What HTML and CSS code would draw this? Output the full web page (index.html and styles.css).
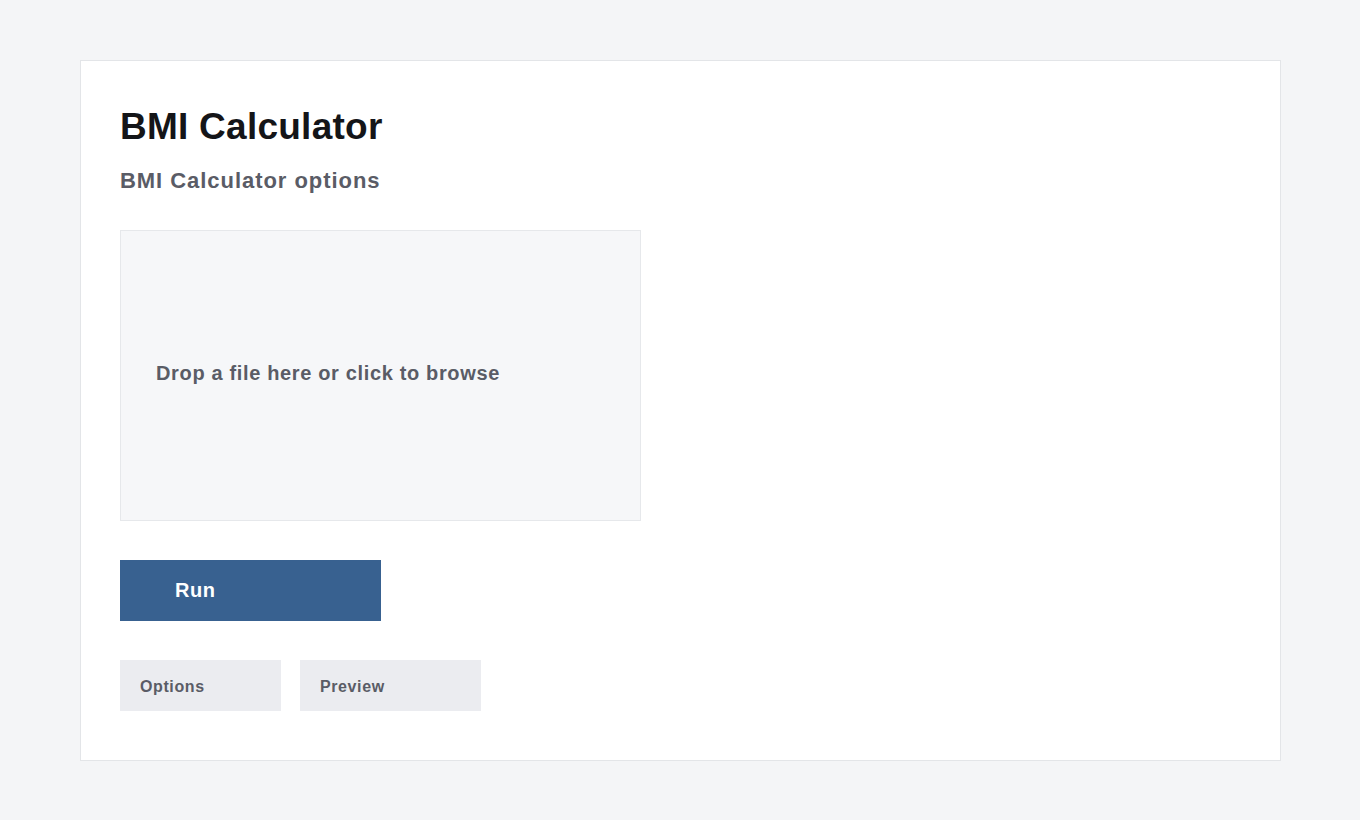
FILE: index.html
```html
<!DOCTYPE html>
<html>
<head>
<meta charset="utf-8">
<link rel="stylesheet" href="styles.css">
</head>
<body>
<main class="card">
  <h1 class="title">BMI Calculator</h1>
  <h2 class="subtitle">BMI Calculator options</h2>
  <div class="dropzone">Drop a file here or click to browse</div>
  <button class="run">Run</button>
  <div class="tabs">
    <div class="tab tab-options">Options</div>
    <div class="tab tab-preview">Preview</div>
  </div>
</main>
</body>
</html>
```
FILE: styles.css
```css
* { box-sizing: border-box; }
html, body { margin: 0; padding: 0; }
body {
  background: #f4f5f7;
  font-family: "Liberation Sans", Arial, sans-serif;
  padding: 60px 80px;
  height: 820px;
}
.card {
  background: #ffffff;
  border: 1px solid #e3e5e8;
  height: 701px;
  width: 1201px;
  padding: 39px 39px;
  display: flex;
  flex-direction: column;
  align-items: flex-start;
}
.title {
  margin: 0;
  font-size: 37px;
  line-height: 54px;
  font-weight: 700;
  letter-spacing: 0.25px;
  color: #141518;
}
.subtitle {
  margin: 11px 0 0 0;
  font-size: 22px;
  line-height: 32px;
  font-weight: 700;
  letter-spacing: 0.95px;
  color: #5a5c66;
}
.dropzone {
  margin-top: 33px;
  width: 521px;
  height: 291px;
  background: #f6f7f9;
  border: 1px solid #e6e8eb;
  display: flex;
  align-items: center;
  padding: 0 0 4px 35px;
  font-size: 20px;
  font-weight: 700;
  letter-spacing: 0.65px;
  color: #5a5c66;
}
.run {
  margin-top: 39px;
  width: 261px;
  height: 61px;
  background: #386190;
  border: none;
  color: #ffffff;
  font-family: inherit;
  font-size: 20px;
  font-weight: 700;
  letter-spacing: 0.5px;
  text-align: left;
  padding: 0 0 0 55px;
}
.tabs {
  margin-top: 39px;
  display: flex;
  gap: 19px;
}
.tab {
  height: 51px;
  background: #ebecf0;
  display: flex;
  align-items: center;
  padding: 2px 0 0 20px;
  font-size: 16px;
  font-weight: 700;
  letter-spacing: 0.6px;
  color: #5a5c66;
}
.tab-options { width: 161px; }
.tab-preview { width: 181px; }
```
